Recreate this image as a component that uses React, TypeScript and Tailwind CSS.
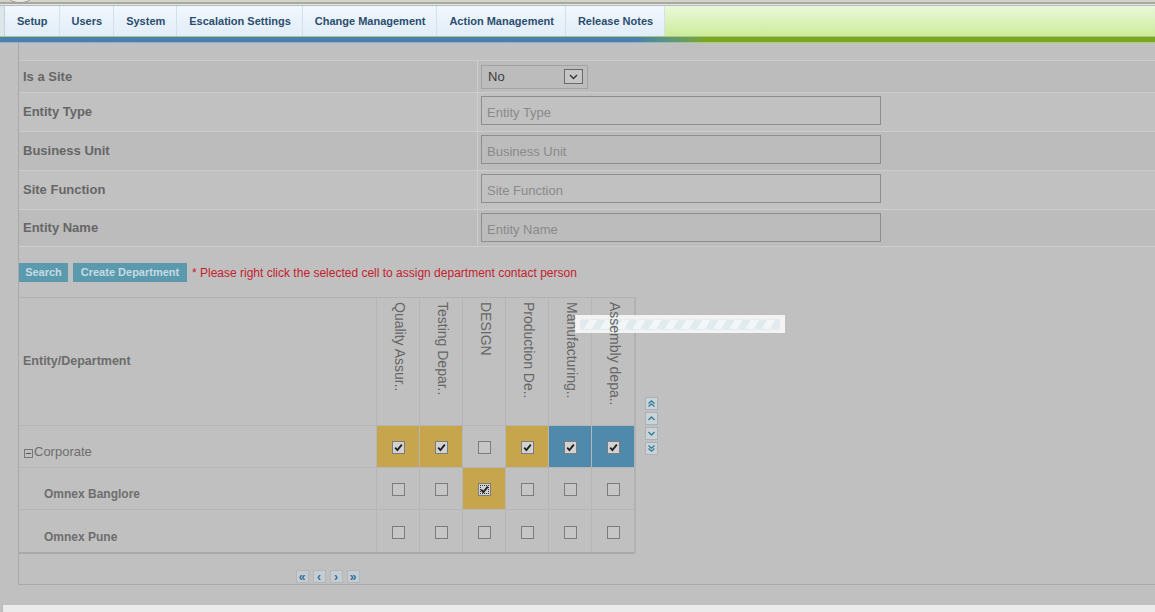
import React from 'react'

const tabs = ['Setup', 'Users', 'System', 'Escalation Settings', 'Change Management', 'Action Management', 'Release Notes']

const formRows: { label: string; kind: 'select' | 'input'; h: string; bg: string }[] = [
  { label: 'Is a Site', kind: 'select', h: 'h-[32px]', bg: 'bg-[#bcbcbc]' },
  { label: 'Entity Type', kind: 'input', h: 'h-[39px]', bg: 'bg-[#c1c1c1]' },
  { label: 'Business Unit', kind: 'input', h: 'h-[39px]', bg: 'bg-[#bcbcbc]' },
  { label: 'Site Function', kind: 'input', h: 'h-[39px]', bg: 'bg-[#c1c1c1]' },
  { label: 'Entity Name', kind: 'input', h: 'h-[37px]', bg: 'bg-[#bcbcbc]' },
]

const depts = ['Quality Assur..', 'Testing Depar..', 'DESIGN', 'Production De..', 'Manufacturing..', 'Assembly depa..']

type Cell = { on: boolean; tone?: 'gold' | 'blue'; focus?: boolean }

const gridRows: { name: string; parent?: boolean; cells: Cell[] }[] = [
  {
    name: 'Corporate',
    parent: true,
    cells: [
      { on: true, tone: 'gold' },
      { on: true, tone: 'gold' },
      { on: false },
      { on: true, tone: 'gold' },
      { on: true, tone: 'blue' },
      { on: true, tone: 'blue' },
    ],
  },
  {
    name: 'Omnex Banglore',
    cells: [{ on: false }, { on: false }, { on: true, tone: 'gold', focus: true }, { on: false }, { on: false }, { on: false }],
  },
  {
    name: 'Omnex Pune',
    cells: [{ on: false }, { on: false }, { on: false }, { on: false }, { on: false }, { on: false }],
  },
]

function Check({ on, focus }: { on: boolean; focus?: boolean }) {
  return (
    <div
      className={
        'flex h-[13px] w-[13px] items-center justify-center border border-[#7c7c7c] ' +
        (on ? 'bg-[#d2d2d2] ' : 'bg-[#c6c6c6] ') +
        (focus ? 'outline outline-1 outline-dotted outline-[#333] outline-offset-[-3px]' : '')
      }
    >
      {on && (
        <svg width="11" height="11" viewBox="0 0 11 11">
          <path d="M2.2 5.6 L4.4 8 L8.8 2.6" fill="none" stroke="#1e1e1e" strokeWidth="1.8" />
        </svg>
      )}
    </div>
  )
}

function ScrollBtn({ d }: { d: string }) {
  return (
    <div className="flex h-[13px] w-[13px] items-center justify-center border border-[#a9b2b7] bg-[#ccd3d7]">
      <svg width="9" height="9" viewBox="0 0 9 9">
        <path d={d} fill="none" stroke="#2f7c9c" strokeWidth="1.3" />
      </svg>
    </div>
  )
}

function PageBtn({ label }: { label: string }) {
  return (
    <div className="flex h-[13px] w-[13px] items-center justify-center border border-[#b1b8bd] bg-[#c7ccd0] text-[12px] font-bold leading-none text-[#2d6c9e]">
      {label}
    </div>
  )
}

export default function App() {
  return (
    <div className="relative flex h-[612px] w-[1155px] flex-col overflow-hidden bg-[#c0c0c0] font-['Liberation_Sans',Arial,sans-serif]">
      {/* top strip with cut logo */}
      <div className="relative h-[2px] bg-[#d2d3cb]">
        <div className="absolute left-[5px] top-[-22px] h-[25px] w-[30px] rounded-full border border-[#9a9a90] bg-[#e6e6e2]" />
      </div>
      <div className="h-[2px] bg-[#a9ab98]" />
      <div className="h-[1px] bg-[#e2e4e6]" />

      {/* nav */}
      <div className="flex h-[32px] border-t border-b border-t-[#b3bcc7] border-b-[#a6cc84] bg-[#dfe6ea]">
        <div className="ml-[4px] flex border-l border-[#c4d2df] bg-gradient-to-b from-[#f1f7fd] to-[#e1edf8]">
          {tabs.map((t) => (
            <div key={t} className="flex items-center border-r border-[#d3dfea] pl-[12px] pr-[11px] text-[11px] font-bold text-[#2c4d6f]">
              {t}
            </div>
          ))}
        </div>
        <div className="flex-1 bg-gradient-to-b from-[#e9f8d9] to-[#cdec9a]" />
      </div>
      <div className="h-[5px] bg-gradient-to-r from-[#4b7fae] from-[55%] to-[#7aa621] to-[61%]" />
      <div className="h-[1px] bg-gradient-to-r from-[#8bb1d4] from-[55%] to-[#a9cf6a] to-[61%]" />

      {/* main */}
      <div className="flex h-[542px]">
        <div className="w-[18px]" />
        <div className="flex flex-1 flex-col border-l border-[#a9a9a9] pt-[17px]">
          {/* form */}
          <div className="border-t border-[#cbcbcb]">
            {formRows.map((r) => (
              <div key={r.label} className={'grid grid-cols-[458px_1fr] border-b border-[#cdcdcd] ' + r.h}>
                <div className={'flex items-center pl-[4px] text-[13px] font-bold text-[#666] ' + r.bg}>{r.label}</div>
                <div
                  className={
                    'flex border-l border-[#cdcdcd] pl-[3px] ' + (r.kind === 'select' ? 'items-center ' : 'items-start pt-[3px] ') + r.bg
                  }
                >
                  {r.kind === 'select' ? (
                    <div className="flex h-[24px] w-[107px] items-center justify-between border border-[#a3a3a3] pl-[6px] pr-[4px] text-[13px] text-[#3c3c3c]">
                      <span>No</span>
                      <div className="flex h-[15px] w-[19px] items-center justify-center border border-[#6a6a6a] bg-[#c6c6c6]">
                        <svg width="9" height="6" viewBox="0 0 9 6">
                          <path d="M1 1 L4.5 4.5 L8 1" fill="none" stroke="#333" strokeWidth="1.3" />
                        </svg>
                      </div>
                    </div>
                  ) : (
                    <div className="flex h-[29px] w-[400px] items-end border border-[#8e8e8e] pb-[2px] pl-[5px] text-[13px] text-[#8a8a8a]">
                      {r.label}
                    </div>
                  )}
                </div>
              </div>
            ))}
          </div>

          {/* buttons */}
          <div className="mt-[16px] flex h-[19px] items-center gap-[5px]">
            <div className="flex h-[19px] w-[49px] items-center justify-center bg-[#5b9aad] text-[11px] font-bold text-[#c6dbe4]">Search</div>
            <div className="flex h-[19px] w-[114px] items-center justify-center bg-[#5b9aad] text-[11px] font-bold text-[#c6dbe4]">
              Create Department
            </div>
            <span className="text-[12px] text-[#c4202e]">* Please right click the selected cell to assign department contact person</span>
          </div>

          {/* grid */}
          <div className="mt-[15px] flex">
            <div className="w-[617px] border-t border-r-2 border-[#b2b2b2]">
              <div className="flex h-[128px] border-b border-[#b6b6b6]">
                <div className="flex w-[357px] items-center pl-[4px] text-[12.5px] font-bold text-[#6c6c6c]">Entity/Department</div>
                {depts.map((d) => (
                  <div key={d} className="flex w-[43px] justify-center border-l border-[#b6b6b6] pl-[3px] pt-[4px]">
                    <span className="relative z-10 text-[14px] leading-[16px] text-[#666] [writing-mode:vertical-rl]">{d}</span>
                  </div>
                ))}
              </div>
              {gridRows.map((r, i) => (
                <div
                  key={r.name}
                  className={'flex h-[42px] ' + (i === gridRows.length - 1 ? 'h-[44px] border-b-2 border-[#a9a9a9]' : 'border-b border-[#b6b6b6]')}
                >
                  <div className={'flex w-[357px] items-end pb-[6px] text-[#6e6e6e] ' + (r.parent ? 'pl-[5px] text-[13px]' : 'pl-[25px] text-[12px] font-bold')}>
                    {r.parent && (
                      <span className="mb-[3px] mr-[1px] flex h-[9px] w-[9px] items-center justify-center border border-[#777]">
                        <span className="h-px w-[5px] bg-[#555]" />
                      </span>
                    )}
                    {r.name}
                  </div>
                  {r.cells.map((c, j) => (
                    <div
                      key={j}
                      className={
                        'flex w-[43px] items-center justify-center border-l border-[#b6b6b6] pt-[2px] ' +
                        (c.tone === 'gold' ? 'bg-[#c6a54c]' : c.tone === 'blue' ? 'bg-[#4f89ab]' : '')
                      }
                    >
                      <Check on={c.on} focus={c.focus} />
                    </div>
                  ))}
                </div>
              ))}
            </div>
            <div className="ml-[9px] flex flex-col gap-[2px] pt-[100px]">
              <ScrollBtn d="M1.5 4.5 L4.5 1.8 L7.5 4.5 M1.5 7.5 L4.5 4.8 L7.5 7.5" />
              <ScrollBtn d="M1.5 6 L4.5 3 L7.5 6" />
              <ScrollBtn d="M1.5 3 L4.5 6 L7.5 3" />
              <ScrollBtn d="M1.5 1.5 L4.5 4.2 L7.5 1.5 M1.5 4.5 L4.5 7.2 L7.5 4.5" />
            </div>
          </div>

          {/* pager */}
          <div className="flex h-[33px] border-b border-[#a9a9a9]">
            <div className="flex w-[617px] items-end justify-center gap-[4px] pb-[1px]">
              <PageBtn label="«" />
              <PageBtn label="‹" />
              <PageBtn label="›" />
              <PageBtn label="»" />
            </div>
          </div>
        </div>
      </div>

      {/* footer */}
      <div className="h-[20px]" />
      <div className="ml-[2px] flex-1 border-l border-[#b8b8b8] bg-[#ebebeb]" />

      {/* loading bar */}
      <div className="absolute left-[575px] top-[315px] flex h-[18px] w-[210px] items-center justify-center bg-[#fbfbfb]/85">
        <div className="h-[11px] w-[200px] rounded-[3px] border border-[#e1e8ec]/70 bg-[repeating-linear-gradient(120deg,#dde8ee_0px,#dde8ee_7px,#f3f7f9_7px,#f3f7f9_14px)] opacity-80" />
      </div>
    </div>
  )
}
